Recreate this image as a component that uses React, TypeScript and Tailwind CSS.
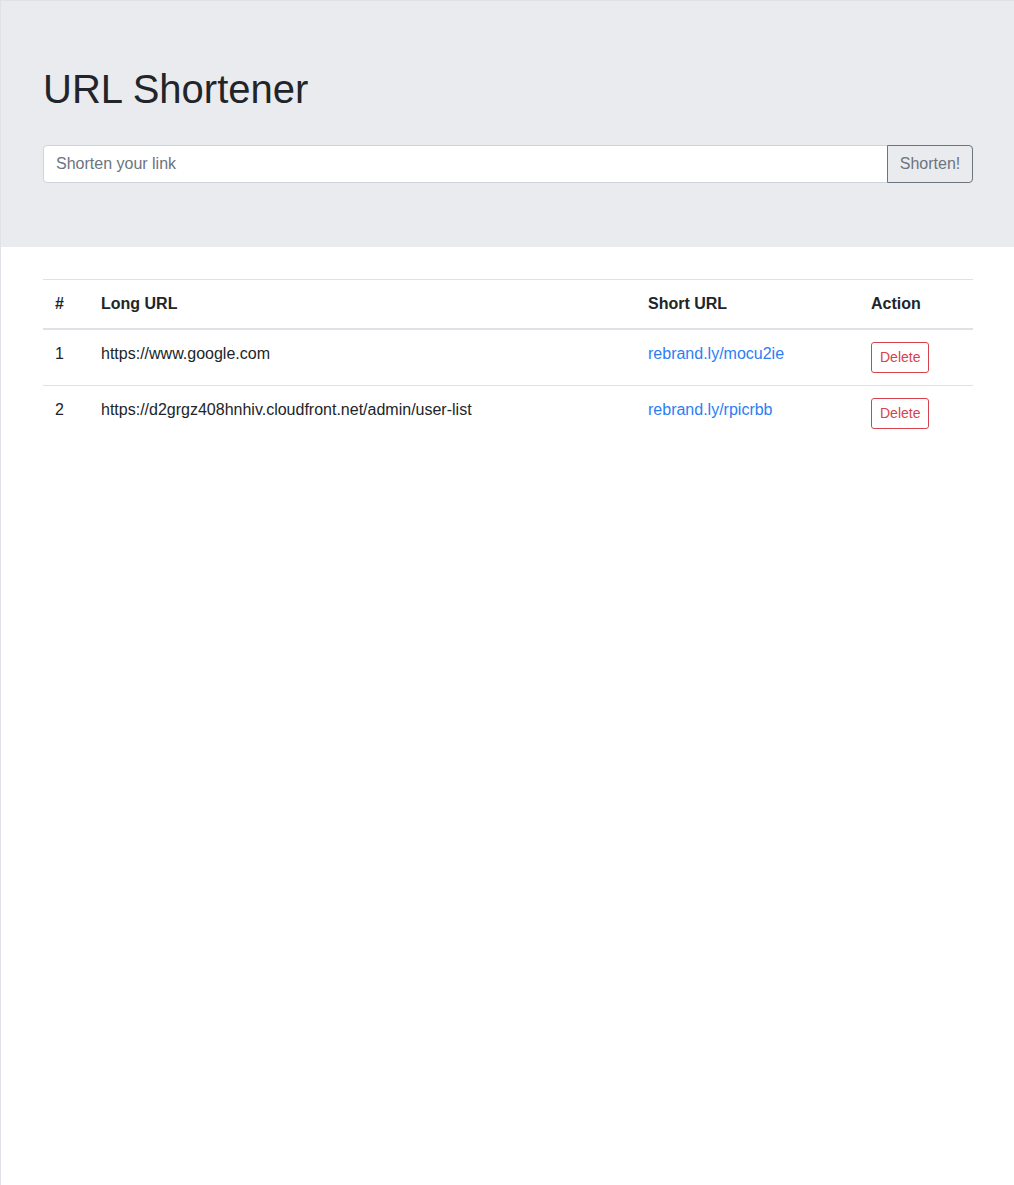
import React from "react";

const rows = [
  { id: 1, long: "https://www.google.com", short: "rebrand.ly/mocu2ie" },
  { id: 2, long: "https://d2grgz408hnhiv.cloudfront.net/admin/user-list", short: "rebrand.ly/rpicrbb" },
];

export default function App() {
  return (
    <div
      className="min-h-[1185px] border-l border-t border-[#dee2e6] bg-white text-[#212529] text-[16px] leading-[1.5]"
      style={{ fontFamily: '"Liberation Sans", Arial, sans-serif' }}
    >
      <div className="bg-[#eaebef] pt-[64px] pb-[64px]">
        <div className="ml-[42px] mr-[41px]">
          <h1 className="text-[40px] leading-[1.2] font-normal mb-[32px]">URL Shortener</h1>
          <div className="flex h-[38px]">
            <input
              className="flex-1 min-w-0 bg-white border border-[#ced4da] rounded-l-[4px] px-[12px] text-[16px] text-[#495057] placeholder:text-[#6c757d] outline-none"
              placeholder="Shorten your link"
            />
            <button className="w-[86px] -ml-px border border-[#6c757d] rounded-r-[4px] text-[#6c757d] text-[16px] bg-transparent">
              Shorten!
            </button>
          </div>
        </div>
      </div>
      <div className="ml-[42px] mr-[41px] mt-[32px]">
        <table className="w-full border-collapse">
          <thead>
            <tr className="border-t border-[#dee2e6]">
              <th className="w-[46px] text-left font-bold px-[12px] py-[12px] border-b-2 border-[#dee2e6]">#</th>
              <th className="w-[547px] text-left font-bold px-[12px] py-[12px] border-b-2 border-[#dee2e6]">Long URL</th>
              <th className="w-[223px] text-left font-bold px-[12px] py-[12px] border-b-2 border-[#dee2e6]">Short URL</th>
              <th className="text-left font-bold px-[12px] py-[12px] border-b-2 border-[#dee2e6]">Action</th>
            </tr>
          </thead>
          <tbody>
            {rows.map((r, i) => (
              <tr key={r.id} className={i > 0 ? "border-t border-[#dee2e6]" : ""}>
                <td className="align-top px-[12px] py-[12px]">{r.id}</td>
                <td className="align-top px-[12px] py-[12px]">{r.long}</td>
                <td className="align-top px-[12px] py-[12px]">
                  <a className="text-[#2a7ef6]" href="#">{r.short}</a>
                </td>
                <td className="align-top px-[12px] py-[12px]">
                  <button className="h-[31px] px-[8px] border border-[#d6434c] rounded-[3px] text-[#d6434c] text-[14px] leading-[1.5] bg-transparent">
                    Delete
                  </button>
                </td>
              </tr>
            ))}
          </tbody>
        </table>
      </div>
    </div>
  );
}
